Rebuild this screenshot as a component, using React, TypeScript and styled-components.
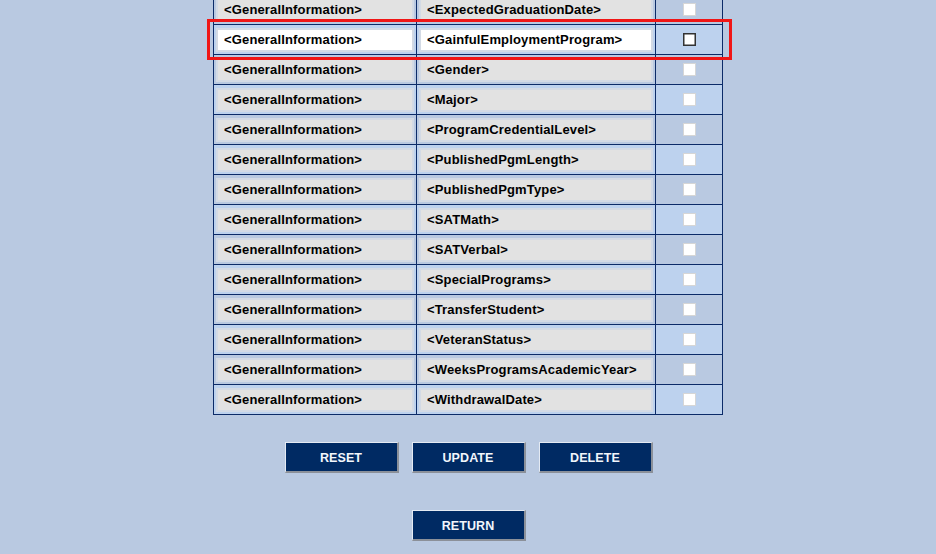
import React from 'react';
import styled, { createGlobalStyle } from 'styled-components';

const GlobalStyle = createGlobalStyle`
  html, body {
    margin: 0;
    padding: 0;
    background: #b9c9e1;
    overflow: hidden;
  }
`;

const ROW_PITCH = 30;

const Page = styled.div`
  display: flex;
  flex-direction: column;
  align-items: center;
  height: 554px;
  font-family: 'Liberation Sans', Arial, sans-serif;
`;

const TableWrap = styled.div`
  position: relative;
  margin-top: -6px;
`;

const Grid = styled.table`
  border-collapse: separate;
  border-spacing: 0;
  border-top: 1px solid #0c2b68;
  border-left: 1px solid #0c2b68;
`;

const Row = styled.tr<{ $alt: boolean }>`
  background: ${p => (p.$alt ? '#bdd2ee' : '#b9c9e1')};
`;

const Cell = styled.td<{ $width: number }>`
  width: ${p => p.$width}px;
  height: 29px;
  padding: 3px 2px 2px 2px;
  box-sizing: border-box;
  border-right: 1px solid #0c2b68;
  border-bottom: 1px solid #0c2b68;
  vertical-align: top;
`;

const CheckCell = styled(Cell)`
  padding: 0 0 1px 0;
  text-align: center;
  vertical-align: middle;
`;

const Field = styled.input<{ $active: boolean }>`
  display: block;
  width: 100%;
  height: 24px;
  box-sizing: border-box;
  margin: 0;
  padding: 0 0 2px 6px;
  border: 2px solid #d3dae5;
  background: ${p => (p.$active ? '#ffffff' : '#e2e2e2')};
  font-family: 'Liberation Sans', Arial, sans-serif;
  font-size: 13px;
  font-weight: bold;
  letter-spacing: 0.15px;
  color: #000;
  outline: none;
`;

const Check = styled.span<{ $active: boolean }>`
  display: inline-block;
  width: 13px;
  height: 13px;
  box-sizing: border-box;
  vertical-align: middle;
  background: #fff;
  border: 1px solid ${p => (p.$active ? '#333333' : '#d6d6d6')};
  ${p => p.$active && 'box-shadow: inset 0 0 0 0.5px #333333;'}
`;

const Highlight = styled.div`
  position: absolute;
  left: -6px;
  width: 525px;
  height: 41px;
  box-sizing: border-box;
  border: 3px solid #f01616;
  pointer-events: none;
`;

const ButtonRow = styled.div`
  display: flex;
  gap: 13px;
  margin-top: 27px;
  margin-left: 1px;
`;

const ReturnRow = styled(ButtonRow)`
  margin-top: 37px;
`;

const ActionButton = styled.button`
  width: 114px;
  height: 31px;
  box-sizing: border-box;
  padding: 2px 0 0 0;
  background: #002a63;
  color: #f2f6fc;
  font-family: 'Liberation Sans', Arial, sans-serif;
  font-size: 12.5px;
  font-weight: bold;
  letter-spacing: 0.1px;
  border-style: solid;
  border-width: 1px 2px 2px 1px;
  border-color: #e4eaf3 #8b9099 #8b9099 #e4eaf3;
  cursor: pointer;
`;

const fields = [
  'ExpectedGraduationDate',
  'GainfulEmploymentProgram',
  'Gender',
  'Major',
  'ProgramCredentialLevel',
  'PublishedPgmLength',
  'PublishedPgmType',
  'SATMath',
  'SATVerbal',
  'SpecialPrograms',
  'TransferStudent',
  'VeteranStatus',
  'WeeksProgramsAcademicYear',
  'WithdrawalDate',
];

const selectedIndex = 1;

export default function App() {
  return (
    <Page>
      <GlobalStyle />
      <TableWrap>
        <Grid>
          <tbody>
            {fields.map((name, i) => {
              const active = i === selectedIndex;
              return (
                <Row key={name} $alt={i % 2 === 1}>
                  <Cell $width={203}>
                    <Field $active={active} readOnly value="<GeneralInformation>" />
                  </Cell>
                  <Cell $width={239}>
                    <Field $active={active} readOnly value={`<${name}>`} />
                  </Cell>
                  <CheckCell $width={67}>
                    <Check $active={active} />
                  </CheckCell>
                </Row>
              );
            })}
          </tbody>
        </Grid>
        <Highlight style={{ top: selectedIndex * ROW_PITCH - 5 }} />
      </TableWrap>
      <ButtonRow>
        <ActionButton>RESET</ActionButton>
        <ActionButton>UPDATE</ActionButton>
        <ActionButton>DELETE</ActionButton>
      </ButtonRow>
      <ReturnRow>
        <ActionButton>RETURN</ActionButton>
      </ReturnRow>
    </Page>
  );
}
